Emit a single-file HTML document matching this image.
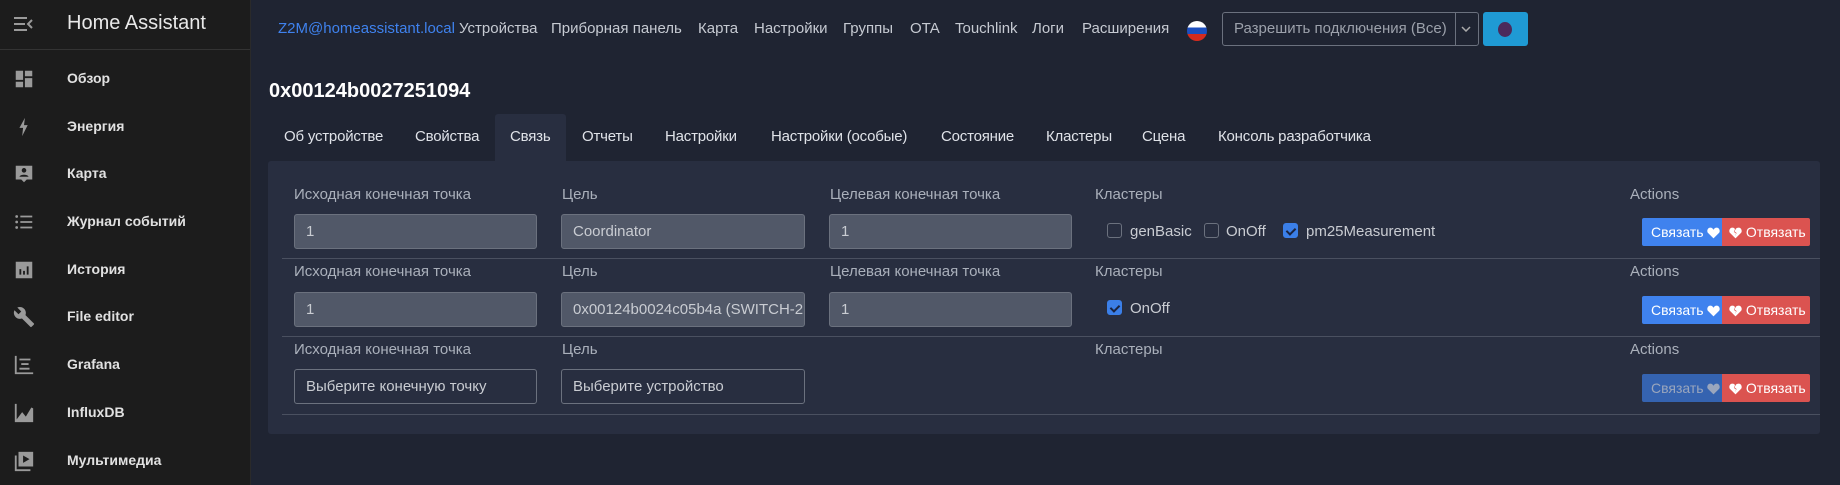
<!DOCTYPE html>
<html><head><meta charset="utf-8"><style>
*{box-sizing:border-box;margin:0;padding:0}
body{width:1840px;height:485px;overflow:hidden;background:#1f2432;font-family:"Liberation Sans","DejaVu Sans",sans-serif;position:relative}
.sb{position:absolute;left:0;top:0;width:251px;height:485px;background:#1c1c1c;border-right:1px solid #2a2a2a}
.sbh{position:absolute;left:0;top:0;width:250px;height:50px;border-bottom:1px solid #333}
.ttl{position:absolute;left:67px;top:12px;font-size:20px;color:#e8e8e8}
.mi{position:absolute;left:0;width:250px;height:40px}
.mi svg{position:absolute;left:13px;top:9px}
.mi span{position:absolute;left:67px;top:11px;font-size:14px;font-weight:bold;color:#e1e1e1}
.a{position:absolute;white-space:nowrap}
.nav{top:20px;font-size:15px;color:#c6cad2}
.tab{top:128px;font-size:15px;color:#dfe2e8;letter-spacing:-0.2px}
.card{position:absolute;left:268px;top:161px;width:1552px;height:273px;background:#282e40;border-radius:3px}
.lbl{font-size:15px;color:#aab0bb}
.inp{position:absolute;height:35px;border:1px solid #6b717e;border-radius:3px;font-size:15px;color:#c9ccd2;padding:8px 11px;white-space:nowrap;overflow:hidden}
.dis{background:#515868}
.sep{position:absolute;left:282px;width:1538px;height:1px;background:#4a5060}
.cb{position:absolute;width:15px;height:15px;border:1px solid #6b717e;border-radius:3px}
.cbc{background:#3b7fe8;border-color:#3b7fe8}
.cbc:after{content:"";position:absolute;left:4px;top:2px;width:4px;height:7px;border:solid #1a2440;border-width:0 2px 2px 0;transform:rotate(45deg)}
.ct{font-size:15px;color:#c9ccd2}
.btn{position:absolute;height:28px;font-size:14px;color:#fff;padding-top:6px;white-space:nowrap}
.btn svg{vertical-align:-2px}
.bl{left:1642px;width:80px;background:#3f82ee;border-radius:2px 0 0 2px;padding-left:9px}
.rd{left:1722px;width:88px;background:#db5350;border-radius:0 2px 2px 0;padding-left:7px}
</style></head><body>
<div class="sb">
<div class="sbh"><svg style="position:absolute;left:14px;top:17px" width="20" height="14" viewBox="0 0 20 14"><path d="M0 1h13M0 7h11M0 13h13" stroke="#9a9a9a" stroke-width="2"/><path d="M18 3l-4 4 4 4" stroke="#9a9a9a" stroke-width="2" fill="none"/></svg><div class="ttl">Home Assistant</div></div>
<div class="mi" style="top:59px"><svg width="22" height="22" viewBox="0 0 24 24"><path fill="#9a9a9a" d="M3 3h8v10H3zM13 3h8v6h-8zM13 11h8v10h-8zM3 15h8v6H3z"/></svg><span>Обзор</span></div>
<div class="mi" style="top:107px"><svg width="22" height="22" viewBox="0 0 24 24"><path fill="#9a9a9a" d="M13 2L7 13h4l-1 9 6-12h-4z"/></svg><span>Энергия</span></div>
<div class="mi" style="top:154px"><svg width="22" height="22" viewBox="0 0 24 24"><path fill="#9a9a9a" d="M3 3h18v15h-6l-3 3-3-3H3z"/><circle cx="12" cy="8" r="2.5" fill="#1c1c1c"/><path d="M7 15c1-3 9-3 10 0z" fill="#1c1c1c"/></svg><span>Карта</span></div>
<div class="mi" style="top:202px"><svg width="22" height="22" viewBox="0 0 24 24"><path fill="#9a9a9a" d="M8 5h13v2H8zM8 11h13v2H8zM8 17h13v2H8z"/><circle cx="4" cy="6" r="1.5" fill="#9a9a9a"/><circle cx="4" cy="12" r="1.5" fill="#9a9a9a"/><circle cx="4" cy="18" r="1.5" fill="#9a9a9a"/></svg><span>Журнал событий</span></div>
<div class="mi" style="top:250px"><svg width="22" height="22" viewBox="0 0 24 24"><path fill="#9a9a9a" d="M3 3h18v18H3z"/><path fill="#1c1c1c" d="M7 11h2v6H7zM11 13h2v4h-2zM15 8h2v9h-2z"/></svg><span>История</span></div>
<div class="mi" style="top:297px"><svg width="22" height="22" viewBox="0 0 24 24"><path fill="#9a9a9a" d="M22.7 19l-9.1-9.1c.9-2.3.4-5-1.5-6.9-2-2-5-2.4-7.4-1.3L9 6 6 9 1.6 4.7C.4 7.1.9 10.1 2.9 12.1c1.9 1.9 4.6 2.4 6.9 1.5l9.1 9.1c.4.4 1 .4 1.4 0l2.3-2.3c.5-.4.5-1.1.1-1.4z"/></svg><span>File editor</span></div>
<div class="mi" style="top:345px"><svg width="22" height="22" viewBox="0 0 24 24"><path fill="none" stroke="#9a9a9a" stroke-width="2" d="M3 2v19h19M7 6h12M9 11h8M7 16h11"/></svg><span>Grafana</span></div>
<div class="mi" style="top:393px"><svg width="22" height="22" viewBox="0 0 24 24"><path fill="#9a9a9a" d="M2 2h2v17l6-8 4 5 6-10 2 1v15H2z"/></svg><span>InfluxDB</span></div>
<div class="mi" style="top:441px"><svg width="22" height="22" viewBox="0 0 24 24"><path fill="#9a9a9a" d="M6 2h16v16H6z"/><path fill="none" stroke="#9a9a9a" stroke-width="2" d="M3 6v16h16"/><path fill="#1c1c1c" d="M11 6l7 4-7 4z"/></svg><span>Мультимедиа</span></div>
</div>

<div class="a nav" style="left:278px;color:#3f82ee">Z2M@homeassistant.local</div>
<div class="a nav" style="left:459px">Устройства</div>
<div class="a nav" style="left:551px">Приборная панель</div>
<div class="a nav" style="left:698px">Карта</div>
<div class="a nav" style="left:754px">Настройки</div>
<div class="a nav" style="left:843px">Группы</div>
<div class="a nav" style="left:910px">OTA</div>
<div class="a nav" style="left:955px">Touchlink</div>
<div class="a nav" style="left:1032px">Логи</div>
<div class="a nav" style="left:1082px">Расширения</div>
<div class="a" style="left:1187px;top:21px;width:20px;height:20px;border-radius:50%;overflow:hidden;background:linear-gradient(#fff 0 33%,#1c4fbf 33% 66%,#d52b1e 66%)"></div>
<div class="a" style="left:1222px;top:12px;width:257px;height:34px;border:1px solid #6b717e;border-radius:3px"></div>
<div class="a" style="left:1455px;top:12px;width:1px;height:34px;background:#6b717e"></div>
<div class="a" style="left:1234px;top:20px;font-size:15px;color:#9ca1ab">Разрешить подключения (Все)</div>
<svg class="a" style="left:1461px;top:26px" width="10" height="6" viewBox="0 0 10 6"><path d="M1 1l4 4 4-4" stroke="#aaa" stroke-width="1.5" fill="none"/></svg>
<div class="a" style="left:1483px;top:12px;width:45px;height:34px;background:#1f9ad4;border-radius:3px"></div>
<div class="a" style="left:1498px;top:22px;width:14px;height:15px;border-radius:50%;background:#4b2a5c"></div>

<div class="a" style="left:269px;top:80px;font-size:20px;font-weight:bold;color:#fff">0x00124b0027251094</div>

<div class="a" style="left:495px;top:114px;width:71px;height:47px;background:#282e40;border-radius:3px 3px 0 0"></div>
<div class="a tab" style="left:284px">Об устройстве</div>
<div class="a tab" style="left:415px">Свойства</div>
<div class="a tab" style="left:510px">Связь</div>
<div class="a tab" style="left:582px">Отчеты</div>
<div class="a tab" style="left:665px">Настройки</div>
<div class="a tab" style="left:771px">Настройки (особые)</div>
<div class="a tab" style="left:941px">Состояние</div>
<div class="a tab" style="left:1046px">Кластеры</div>
<div class="a tab" style="left:1142px">Сцена</div>
<div class="a tab" style="left:1218px">Консоль разработчика</div>

<div class="card"></div>

<!-- row 1 -->
<div class="a lbl" style="left:294px;top:186px">Исходная конечная точка</div>
<div class="a lbl" style="left:562px;top:186px">Цель</div>
<div class="a lbl" style="left:830px;top:186px">Целевая конечная точка</div>
<div class="a lbl" style="left:1095px;top:186px">Кластеры</div>
<div class="a lbl" style="left:1630px;top:186px">Actions</div>
<div class="inp dis" style="left:294px;top:214px;width:243px">1</div>
<div class="inp dis" style="left:561px;top:214px;width:244px">Coordinator</div>
<div class="inp dis" style="left:829px;top:214px;width:243px">1</div>
<div class="cb" style="left:1107px;top:223px"></div><div class="a ct" style="left:1130px;top:223px">genBasic</div>
<div class="cb" style="left:1204px;top:223px"></div><div class="a ct" style="left:1226px;top:223px">OnOff</div>
<div class="cb cbc" style="left:1283px;top:223px"></div><div class="a ct" style="left:1306px;top:223px">pm25Measurement</div>
<div class="btn bl" style="top:218px">Связать <svg width="13" height="12" viewBox="0 0 24 22"><path fill="#fff" d="M12 21L2 11C-1 8 1 1 6 1c3 0 5 2 6 4 1-2 3-4 6-4 5 0 7 7 4 10z"/></svg></div><div class="btn rd" style="top:218px"><svg width="13" height="12" viewBox="0 0 24 22"><path fill="#fff" d="M12 21L2 11C-1 8 1 1 6 1c3 0 4 1 5 3l-2 5 4 3-2 5 3-6-4-3 3-5c1-1 2-2 5-2 5 0 7 7 4 10z"/></svg> Отвязать</div>
<div class="sep" style="top:258px"></div>

<!-- row 2 -->
<div class="a lbl" style="left:294px;top:263px">Исходная конечная точка</div>
<div class="a lbl" style="left:562px;top:263px">Цель</div>
<div class="a lbl" style="left:830px;top:263px">Целевая конечная точка</div>
<div class="a lbl" style="left:1095px;top:263px">Кластеры</div>
<div class="a lbl" style="left:1630px;top:263px">Actions</div>
<div class="inp dis" style="left:294px;top:292px;width:243px">1</div>
<div class="inp dis" style="left:561px;top:292px;width:244px">0x00124b0024c05b4a (SWITCH-2</div>
<div class="inp dis" style="left:829px;top:292px;width:243px">1</div>
<div class="cb cbc" style="left:1107px;top:300px"></div><div class="a ct" style="left:1130px;top:300px">OnOff</div>
<div class="btn bl" style="top:296px">Связать <svg width="13" height="12" viewBox="0 0 24 22"><path fill="#fff" d="M12 21L2 11C-1 8 1 1 6 1c3 0 5 2 6 4 1-2 3-4 6-4 5 0 7 7 4 10z"/></svg></div><div class="btn rd" style="top:296px"><svg width="13" height="12" viewBox="0 0 24 22"><path fill="#fff" d="M12 21L2 11C-1 8 1 1 6 1c3 0 4 1 5 3l-2 5 4 3-2 5 3-6-4-3 3-5c1-1 2-2 5-2 5 0 7 7 4 10z"/></svg> Отвязать</div>
<div class="sep" style="top:336px"></div>

<!-- row 3 -->
<div class="a lbl" style="left:294px;top:341px">Исходная конечная точка</div>
<div class="a lbl" style="left:562px;top:341px">Цель</div>
<div class="a lbl" style="left:1095px;top:341px">Кластеры</div>
<div class="a lbl" style="left:1630px;top:341px">Actions</div>
<div class="inp" style="left:294px;top:369px;width:243px">Выберите конечную точку</div>
<div class="inp" style="left:561px;top:369px;width:244px">Выберите устройство</div>
<div class="btn bl" style="top:374px;background:#3563b0;color:#9aa6bd">Связать <svg width="13" height="12" viewBox="0 0 24 22"><path fill="#9aa6bd" d="M12 21L2 11C-1 8 1 1 6 1c3 0 5 2 6 4 1-2 3-4 6-4 5 0 7 7 4 10z"/></svg></div><div class="btn rd" style="top:374px"><svg width="13" height="12" viewBox="0 0 24 22"><path fill="#fff" d="M12 21L2 11C-1 8 1 1 6 1c3 0 4 1 5 3l-2 5 4 3-2 5 3-6-4-3 3-5c1-1 2-2 5-2 5 0 7 7 4 10z"/></svg> Отвязать</div>
<div class="sep" style="top:414px"></div>
</body></html>
